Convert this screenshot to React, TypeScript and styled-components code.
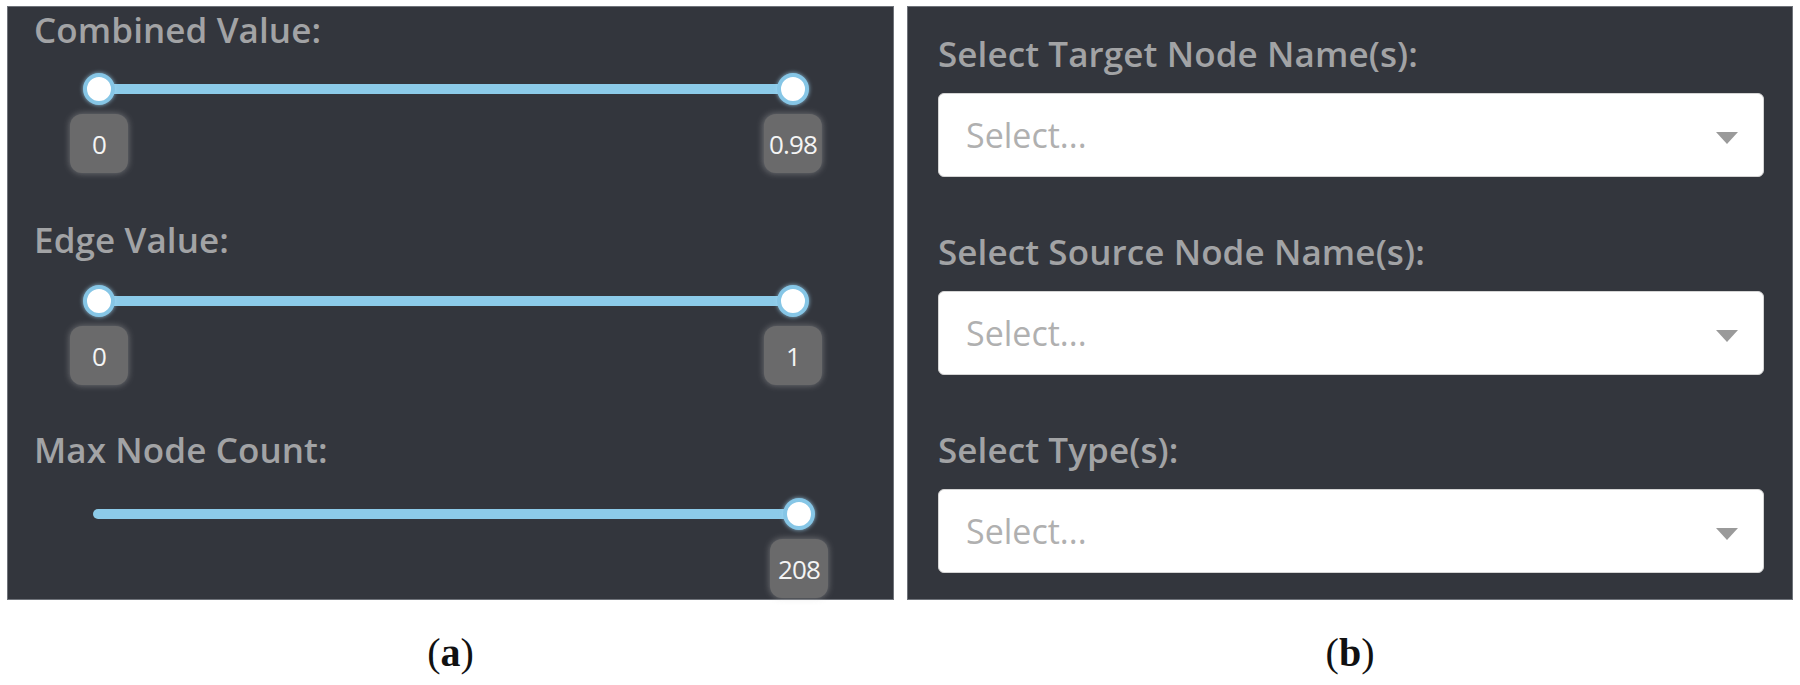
import styled, { createGlobalStyle } from 'styled-components'

const GlobalStyle = createGlobalStyle`
  html, body {
    margin: 0;
    padding: 0;
    background: #ffffff;
  }
`

const Page = styled.div`
  width: 1800px;
  height: 685px;
  box-sizing: border-box;
  padding: 6px 7px 0 7px;
  display: grid;
  grid-template-columns: 887px 886px;
  grid-template-rows: 594px auto;
  column-gap: 13px;
`

const Panel = styled.div`
  background: #33363d;
  border: 1px solid #6f737a;
  box-sizing: border-box;
  font-family: 'Open Sans', 'Noto Sans', sans-serif;
`

const SliderPanel = styled(Panel)`
  padding: 1px 0 0 26px;
`

const SelectPanel = styled(Panel)`
  padding: 25px 28px 0 30px;
`

const Label = styled.div`
  font-size: 35px;
  line-height: 44px;
  font-weight: 600;
  letter-spacing: 0.1px;
  color: #a2a3a5;
  white-space: nowrap;
`

const SliderSection = styled.div`
  height: 210px;
  display: flex;
  flex-direction: column;
`

const Rail = styled.div<{ $left: number; $width: number; $top: number }>`
  position: relative;
  margin: ${({ $top }) => $top - 5}px 0 0 ${({ $left }) => $left}px;
  width: ${({ $width }) => $width}px;
  height: 10px;
  border-radius: 5px;
  background: #8ccbe9;
`

const Handle = styled.div<{ $end?: boolean }>`
  position: absolute;
  top: 50%;
  left: ${({ $end }) => ($end ? '100%' : '0')};
  transform: translate(-50%, -50%);
  width: 32px;
  height: 32px;
  box-sizing: border-box;
  border-radius: 50%;
  background: #ffffff;
  border: 4px solid #86c6e6;
  box-shadow: 0 0 4px rgba(160, 215, 245, 0.8);
`

const Tip = styled.div<{ $end?: boolean }>`
  position: absolute;
  top: 30px;
  left: ${({ $end }) => ($end ? '100%' : '0')};
  transform: translateX(-50%);
  min-width: 58px;
  height: 59px;
  padding: 0 5px;
  box-sizing: border-box;
  border-radius: 12px;
  background: #6a6a6b;
  box-shadow: 0 0 7px rgba(200, 200, 200, 0.45);
  display: flex;
  align-items: center;
  justify-content: center;
  color: #f4f4f4;
  font-size: 26px;
  letter-spacing: -0.8px;
`

const FieldSection = styled.div`
  display: flex;
  flex-direction: column;
  gap: 17px;
  margin-bottom: 53px;
`

const SelectBox = styled.div`
  height: 84px;
  box-sizing: border-box;
  background: #ffffff;
  border: 1px solid #d4d4d4;
  border-radius: 6px;
  padding: 0 25px 0 27px;
  display: flex;
  align-items: center;
  justify-content: space-between;
`

const Placeholder = styled.span`
  font-size: 34px;
  font-weight: 400;
  color: #b0b0b0;
`

const Arrow = styled.span`
  width: 0;
  height: 0;
  margin-top: 5px;
  border-left: 11.5px solid transparent;
  border-right: 11.5px solid transparent;
  border-top: 12px solid #9a9a9a;
`

const Caption = styled.div`
  margin-top: 30px;
  text-align: center;
  font-family: 'Liberation Serif', 'DejaVu Serif', serif;
  font-size: 40px;
  line-height: 46px;
  color: #111111;
`

type SliderProps = {
  label: string
  left: number
  width: number
  top: number
  min?: string
  max: string
}

const RangeSlider = ({ label, left, width, top, min, max }: SliderProps) => (
  <SliderSection>
    <Label>{label}</Label>
    <Rail $left={left} $width={width} $top={top}>
      {min !== undefined && (
        <>
          <Handle />
          <Tip>{min}</Tip>
        </>
      )}
      <Handle $end />
      <Tip $end>{max}</Tip>
    </Rail>
  </SliderSection>
)

const SelectField = ({ label }: { label: string }) => (
  <FieldSection>
    <Label>{label}</Label>
    <SelectBox>
      <Placeholder>Select...</Placeholder>
      <Arrow />
    </SelectBox>
  </FieldSection>
)

export default function App() {
  return (
    <Page>
      <GlobalStyle />
      <SliderPanel>
        <RangeSlider label="Combined Value:" left={65} width={694} top={37} min="0" max="0.98" />
        <RangeSlider label="Edge Value:" left={65} width={694} top={39} min="0" max="1" />
        <RangeSlider label="Max Node Count:" left={59} width={706} top={42} max="208" />
      </SliderPanel>
      <SelectPanel>
        <SelectField label="Select Target Node Name(s):" />
        <SelectField label="Select Source Node Name(s):" />
        <SelectField label="Select Type(s):" />
      </SelectPanel>
      <Caption>
        (<b>a</b>)
      </Caption>
      <Caption>
        (<b>b</b>)
      </Caption>
    </Page>
  )
}
